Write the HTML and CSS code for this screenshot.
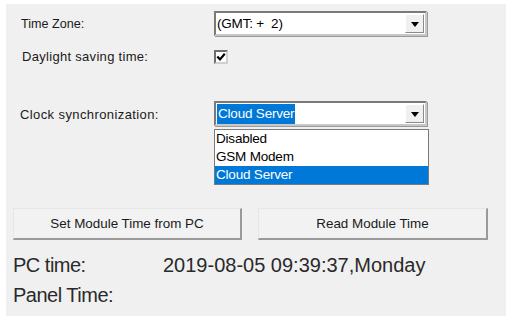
FILE: index.html
```html
<!DOCTYPE html>
<html>
<head>
<meta charset="utf-8">
<link rel="stylesheet" href="styles.css">
</head>
<body>
<div class="panel">
  <div class="row row-tz">
    <span class="label">Time Zone:</span>
    <div class="combo">
      <span class="combo-text">(GMT: + &nbsp;2)</span>
      <span class="combo-btn"><svg width="8" height="5" viewBox="0 0 8 5"><path d="M0 0H8L4 5Z" fill="#000"/></svg></span>
    </div>
  </div>
  <div class="row row-dst">
    <span class="label">Daylight saving time:</span>
    <span class="check"><svg width="10" height="10" viewBox="0 0 10 10"><path d="M1.3 4.4L4 7.4L8.8 1.8" fill="none" stroke="#000" stroke-width="2.2"/></svg></span>
  </div>
  <div class="row row-sync">
    <span class="label">Clock synchronization:</span>
    <div class="control">
      <div class="combo">
        <span class="combo-text"><span class="sel">Cloud Server</span></span>
        <span class="combo-btn"><svg width="8" height="5" viewBox="0 0 8 5"><path d="M0 0H8L4 5Z" fill="#000"/></svg></span>
      </div>
      <ul class="list">
        <li>Disabled</li>
        <li>GSM Modem</li>
        <li class="active">Cloud Server</li>
      </ul>
    </div>
  </div>
  <div class="buttons">
    <button class="btn btn-set">Set Module Time from PC</button>
    <button class="btn btn-read">Read Module Time</button>
  </div>
  <div class="times">
    <div class="time-row"><span class="time-label">PC time:</span><span class="time-val">2019-08-05 09:39:37,Monday</span></div>
    <div class="time-row"><span class="time-label">Panel Time:</span></div>
  </div>
</div>
</body>
</html>
```

FILE: styles.css
```css
html, body {
  margin: 0;
  padding: 0;
  background: #ffffff;
}
body {
  font-family: "Liberation Sans", Arial, sans-serif;
  color: #000;
}
.panel {
  margin: 4px 0 0 6px;
  width: 500px;
  height: 312px;
  background: #f0f0f0;
  overflow: hidden;
}
.row {
  display: flex;
  align-items: flex-start;
}
.label {
  width: 193px;
  padding-left: 15px;
  padding-top: 1px;
  font-size: 12.6px;
  line-height: 25px;
  color: #1a1a1a;
}
.row-tz {
  padding-top: 7px;
}
.row-dst {
  margin-top: 13px;
  height: 14px;
}
.row-dst .label {
  line-height: 14px;
  padding-top: 0;
  padding-left: 16px;
  width: 192px;
  font-size: 13px;
  letter-spacing: 0.3px;
}
.row-sync {
  margin-top: 37px;
}
.row-sync .label {
  padding-left: 14px;
  width: 194px;
  font-size: 13px;
  letter-spacing: 0.4px;
}
.combo {
  width: 209px;
  height: 21px;
  background: #fff;
  border-style: solid;
  border-width: 2px;
  border-color: #7a7a7a #c8c8c8 #c8c8c8 #7a7a7a;
  display: flex;
  align-items: center;
  justify-content: space-between;
  box-shadow: 1px 1px 0 #9a9a9a;
}
.combo-text {
  font-size: 13.5px;
  padding-left: 1px;
  line-height: 20px;
  letter-spacing: -0.2px;
}
.sel {
  background: #0078d7;
  color: #fff;
  padding: 0 1px;
  display: inline-block;
  line-height: 20px;
}
.combo-btn {
  width: 19px;
  height: 19px;
  margin-right: 1px;
  background: #f0f0f0;
  border-style: solid;
  border-width: 1px;
  border-color: #fff #8a8a8a #8a8a8a #fff;
  box-sizing: border-box;
  display: flex;
  align-items: center;
  justify-content: center;
}
.combo-btn svg {
  margin-top: 1px;
}
.check {
  width: 14px;
  height: 14px;
  box-sizing: border-box;
  background: #fff;
  border-style: solid;
  border-width: 2px;
  border-color: #6e6e6e #d0d0d0 #d0d0d0 #6e6e6e;
  display: flex;
  align-items: center;
  justify-content: center;
}
.control {
  display: flex;
  flex-direction: column;
}
.list {
  list-style: none;
  margin: 3px 0 0 0;
  padding: 0;
  width: 213px;
  background: #fff;
  border: 1px solid #7a7a7a;
  font-size: 13.5px;
  letter-spacing: -0.2px;
}
.list li {
  height: 18px;
  line-height: 18px;
  padding-left: 1px;
}
.list li.active {
  background: #0078d7;
  color: #fff;
}
.buttons {
  margin-top: 23px;
  padding-left: 7px;
  display: flex;
  gap: 16px;
}
.btn {
  font-family: "Liberation Sans", Arial, sans-serif;
  font-size: 13.4px;
  color: #1a1a1a;
  height: 32px;
  background: #f2f2f2;
  border-style: solid;
  border-width: 1px 2px 2px 1px;
  border-color: #e6e6e6 #9a9a9a #9a9a9a #e6e6e6;
  padding: 0;
}
.btn-set {
  width: 229px;
}
.btn-read {
  width: 230px;
}
.times {
  margin-top: 10px;
  padding-left: 7px;
  font-size: 20px;
  color: #2a2a2a;
}
.time-row {
  display: flex;
  line-height: 30px;
}
.time-label {
  width: 150px;
  letter-spacing: -0.5px;
}
```
